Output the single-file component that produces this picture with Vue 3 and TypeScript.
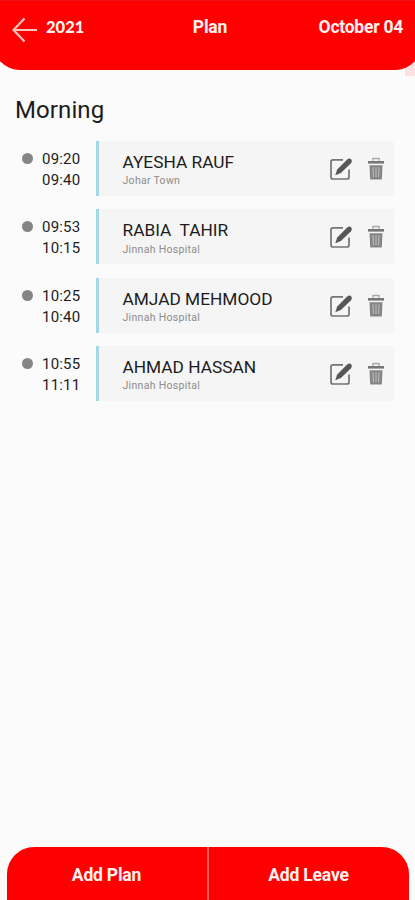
<script setup lang="ts">
interface Visit {
  start: string
  end: string
  name: string
  place: string
}

const visits: Visit[] = [
  { start: '09:20', end: '09:40', name: 'AYESHA RAUF', place: 'Johar Town' },
  { start: '09:53', end: '10:15', name: 'RABIA  TAHIR', place: 'Jinnah Hospital' },
  { start: '10:25', end: '10:40', name: 'AMJAD MEHMOOD', place: 'Jinnah Hospital' },
  { start: '10:55', end: '11:11', name: 'AHMAD HASSAN', place: 'Jinnah Hospital' },
]
</script>

<template>
  <div class="screen">
    <header class="header">
      <div class="side">
        <svg class="back" viewBox="0 0 26 26" aria-label="Back">
          <path d="M12.5 1.5 L1.5 13 L12.5 24.5 M1.5 13 H25" />
        </svg>
        <span class="year">2021</span>
      </div>
      <span class="title">Plan</span>
      <span class="date">October 04</span>
      <i class="corner"></i>
    </header>

    <main class="content">
      <h1 class="heading">Morning</h1>
      <ul class="list">
        <li v-for="v in visits" :key="v.start" class="row">
          <i class="dot"></i>
          <div class="times">
            <span>{{ v.start }}</span>
            <span>{{ v.end }}</span>
          </div>
          <div class="card">
            <div class="info">
              <span class="name">{{ v.name }}</span>
              <span class="place">{{ v.place }}</span>
            </div>
            <svg class="edit" viewBox="0 0 24 24" aria-label="Edit">
              <path class="frame" d="M14 2.8 H4 Q2 2.8 2 4.8 V20 Q2 22 4 22 H18 Q20 22 20 20 V12.5" />
              <path class="pen" d="M6.3 18.2 L8.2 12.6 L18.2 2.4 Q20.3 .6 22.2 2.2 Q23.8 4.1 22 6.2 L11.9 16.1 Z" />
            </svg>
            <svg class="trash" viewBox="0 0 18 24" aria-label="Delete">
              <path class="handle" d="M6 3.8 V1.5 H12 V3.8" />
              <path class="lid" d="M1 4 H17 V6.6 H1 Z" />
              <path class="bin" d="M2.5 8.2 H15.5 L14.8 22.5 H3.2 Z" />
              <path class="slots" d="M6 10.3 L6.4 20.3 M9 10.3 V20.3 M12 10.3 L11.6 20.3" />
            </svg>
          </div>
        </li>
      </ul>
    </main>

    <footer class="footer">
      <button class="action">Add Plan</button>
      <button class="action">Add Leave</button>
    </footer>
  </div>
</template>

<style>
body {
  background: #fbfbfb;
}
</style>

<style scoped>
.screen {
  position: relative;
  z-index: 0;
  display: flex;
  flex-direction: column;
  height: 900px;
  overflow: hidden;
  background: #fbfbfb;
  font-family: Roboto, "Liberation Sans", sans-serif;
  color: #1c1c1c;
}

.header {
  position: relative;
  flex: none;
  display: grid;
  grid-template-columns: 1fr auto 1fr;
  align-items: start;
  height: 70px;
  margin: 0 -7px;
  padding: 14px 19px 0 19px;
  box-sizing: border-box;
  background: #ff0000;
  border-top: 1px solid #ea1212;
  border-radius: 0 0 27px 27px;
  color: #fff2f0;
  font-size: 17.5px;
  line-height: 24px;
  font-weight: 700;
}

.side {
  display: flex;
}

.back {
  width: 26px;
  height: 26px;
  margin-top: 2px;
  fill: none;
  stroke: #ffc4c0;
  stroke-width: 2.2;
}

.year {
  margin-left: 8px;
  font-family: Lato, sans-serif;
  font-weight: 900;
  font-size: 16.5px;
}

.title {
  padding-left: 5px;
  letter-spacing: -0.2px;
}

.date {
  justify-self: end;
  letter-spacing: -0.25px;
}

.corner {
  position: absolute;
  z-index: -1;
  right: 7px;
  bottom: -6px;
  width: 10px;
  height: 18px;
  background: #ffe0e2;
}

.content {
  flex: 1;
  padding: 24px 21px 0 15px;
}

.heading {
  margin: 0;
  font-size: 24px;
  line-height: 32px;
  font-weight: 400;
  letter-spacing: 0.1px;
}

.list {
  display: flex;
  flex-direction: column;
  gap: 13.3px;
  margin: 15px 0 0;
  padding: 0;
  list-style: none;
}

.row {
  display: flex;
  height: 55px;
}

.dot {
  width: 11px;
  height: 11px;
  margin: 12px 0 0 7px;
  border-radius: 50%;
  background: #858585;
}

.times {
  display: flex;
  flex-direction: column;
  width: 54px;
  padding: 8px 0 0 9px;
  box-sizing: border-box;
  font-size: 15px;
  line-height: 21px;
  letter-spacing: 0.2px;
}

.card {
  flex: 1;
  display: flex;
  align-items: flex-start;
  margin-left: 8.5px;
  padding-right: 9px;
  border-left: 3px solid #a3d7e5;
  border-radius: 0 3px 3px 0;
  background: #f5f5f5;
}

.info {
  flex: 1;
  display: flex;
  flex-direction: column;
  padding: 10px 0 0 24px;
}

.name {
  font-size: 17.3px;
  line-height: 22px;
  white-space: pre;
}

.place {
  padding-top: 1.4px;
  font-size: 10.5px;
  line-height: 14px;
  letter-spacing: 0.3px;
  color: #8c8c8c;
}

.edit {
  width: 24px;
  height: 24px;
  margin-top: 16px;
}

.frame {
  fill: none;
  stroke: #747474;
  stroke-width: 1.7;
}

.pen {
  fill: #575757;
}

.trash {
  width: 18px;
  height: 24px;
  margin: 16px 0 0 14px;
}

.handle {
  fill: none;
  stroke: #aaa;
  stroke-width: 1.5;
}

.lid {
  fill: #777;
}

.bin {
  fill: #858585;
}

.slots {
  fill: none;
  stroke: #bdbdbd;
  stroke-width: 1.1;
}

.footer {
  flex: none;
  display: flex;
  height: 53px;
  margin: 0 6px 0 7px;
  overflow: hidden;
  border-radius: 27px 27px 0 0;
  background: #ff0000;
}

.action {
  flex: 1;
  padding: 2px 1px 0 0;
  border: 0;
  background: none;
  color: #fff2f0;
  font: 700 17.5px/53px Roboto, "Liberation Sans", sans-serif;
  letter-spacing: -0.2px;
}

.action + .action {
  border-left: 2px solid #e86060;
}
</style>
